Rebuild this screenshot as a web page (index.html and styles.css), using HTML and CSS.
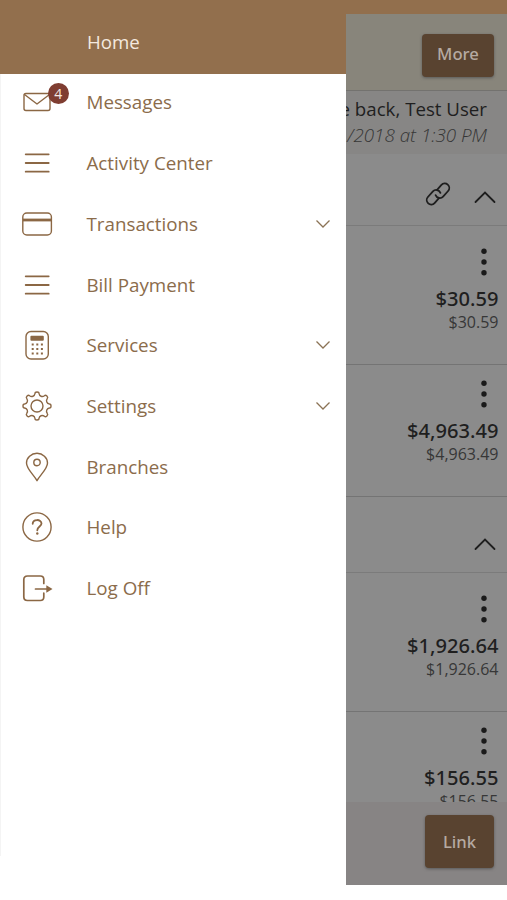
FILE: index.html
```html
<!DOCTYPE html>
<html lang="en">
<head>
<meta charset="utf-8">
<title>Home</title>
<link rel="stylesheet" href="styles.css">
</head>
<body>
<div class="app">
  <nav class="drawer">
    <div class="home">Home</div>
    <ul class="menu">
      <li><span class="icon"><svg viewBox="-18 -18 36 36"><rect x="-13" y="-8.5" width="26" height="17" rx="2"/><path d="M-12.5-7.5L0 2 12.5-7.5"/></svg><b class="badge">4</b></span><span class="label">Messages</span></li>
      <li><span class="icon"><svg viewBox="-18 -18 36 36"><path class="bars" d="M-11.3-8.7h23M-11.3 0h23M-11.3 8.7h23"/></svg></span><span class="label">Activity Center</span></li>
      <li><span class="icon"><svg viewBox="-18 -18 36 36"><rect x="-14.2" y="-11" width="28.6" height="22" rx="4"/><path class="stripe" d="M-14-4h28"/></svg></span><span class="label">Transactions</span><svg class="chevron" viewBox="0 0 16 10"><path d="M1.5 1.5L8 8l6.500-6.500"/></svg></li>
      <li><span class="icon"><svg viewBox="-18 -18 36 36"><path class="bars" d="M-11.3-8.7h23M-11.3 0h23M-11.3 8.7h23"/></svg></span><span class="label">Bill Payment</span></li>
      <li><span class="icon"><svg viewBox="-18 -18 36 36"><rect x="-11" y="-13.500" width="22.300" height="27.500" rx="5"/><rect class="solid" x="-6.600" y="-9.200" width="13.400" height="5" rx="1"/><path class="keys" d="M-5.300-.5h12M-5.300 4h12M-5.300 8.500h12"/></svg></span><span class="label">Services</span><svg class="chevron" viewBox="0 0 16 10"><path d="M1.500 1.500L8 8l6.500-6.500"/></svg></li>
      <li><span class="icon"><svg viewBox="-18 -18 36 36"><circle r="6"/><path d="M-2-12.500Q-2-14 0-14Q2-14 2-12.500C2.400-9.800 5.230-8.630 7.420-10.250Q8.490-11.300 9.900-9.900Q11.300-8.490 10.250-7.420C8.630-5.230 9.800-2.400 12.500-2Q14-2 14 0Q14 2 12.500 2C9.800 2.400 8.630 5.230 10.250 7.420Q11.300 8.490 9.900 9.900Q8.490 11.300 7.420 10.250C5.230 8.630 2.400 9.800 2 12.500Q2 14 0 14Q-2 14-2 12.500C-2.400 9.800-5.230 8.630-7.420 10.250Q-8.490 11.300-9.900 9.900Q-11.300 8.490-10.250 7.420C-8.630 5.230-9.800 2.400-12.500 2Q-14 2-14 0Q-14-2-12.500-2C-9.800-2.400-8.630-5.230-10.250-7.420Q-11.300-8.490-9.900-9.900Q-8.490-11.300-7.420-10.250C-5.230-8.630-2.400-9.800-2-12.500Z"/></svg></span><span class="label">Settings</span><svg class="chevron" viewBox="0 0 16 10"><path d="M1.500 1.500L8 8l6.500-6.500"/></svg></li>
      <li><span class="icon"><svg viewBox="-18 -18 36 36"><path d="M0 13.700C-3 8-10.500 2-10.500-4A10.500 9.700 0 0 1 10.500-4C10.500 2 3 8 0 13.700Z"/><circle cy="-4.500" r="3.200"/></svg></span><span class="label">Branches</span></li>
      <li><span class="icon"><svg viewBox="-18 -18 36 36"><circle r="14.100"/><path class="query" d="M-4.300-3.200C-4.300-8.200 4.500-8.200 4.500-3.400C4.500-.5.300-.3.300 3.300"/><circle class="solid" cx=".3" cy="6.500" r="1.200"/></svg></span><span class="label">Help</span></li>
      <li><span class="icon"><svg viewBox="-18 -18 36 36"><path class="door" d="M6.800-4.500V-8.500Q6.800-12 3.300-12H-9.500Q-13.200-12-13.200-8.300V8.700Q-13.200 12.500-9.500 12.500H3.300Q6.800 12.500 6.800 9V5.200M-1.500 1H11"/><path class="solid" d="M9.300-2.800L15.500 1 9.300 4.800Z"/></svg></span><span class="label">Log Off</span></li>
    </ul>
  </nav>
  <main class="page">
    <header class="toolbar"><button class="btn more">More</button></header>
    <section class="welcome"><p>e back, Test User</p><p class="last">/2018 at 1:30 PM</p></section>
    <div class="accounts">
      <div class="group first"><svg class="chain" viewBox="0 0 28 28"><g transform="rotate(-48 14 14)"><path d="M11.500 17.500H5a4.500 4.500 0 0 1 0-9h7.500a4.500 4.500 0 0 1 4 6.500"/><path d="M16.500 10.500H23a4.500 4.500 0 0 1 0 9h-7.500a4.500 4.500 0 0 1-4-6.500"/></g></svg><svg class="fold" viewBox="0 0 22 14"><path d="M1.500 12L11 2.500 20.500 12"/></svg></div>
      <article class="account a1"><svg class="dots" viewBox="0 0 6 28"><circle cx="3" cy="3.200" r="2.700"/><circle cx="3" cy="14" r="2.700"/><circle cx="3" cy="24.800" r="2.700"/></svg><strong>$30.59</strong><span>$30.59</span></article>
      <article class="account a2"><svg class="dots" viewBox="0 0 6 28"><circle cx="3" cy="3.200" r="2.700"/><circle cx="3" cy="14" r="2.700"/><circle cx="3" cy="24.800" r="2.700"/></svg><strong>$4,963.49</strong><span>$4,963.49</span></article>
      <div class="group second"><svg class="fold" viewBox="0 0 22 14"><path d="M1.500 12L11 2.500 20.500 12"/></svg></div>
      <article class="account a1"><svg class="dots" viewBox="0 0 6 28"><circle cx="3" cy="3.200" r="2.700"/><circle cx="3" cy="14" r="2.700"/><circle cx="3" cy="24.800" r="2.700"/></svg><strong>$1,926.64</strong><span>$1,926.64</span></article>
      <article class="account a2"><svg class="dots" viewBox="0 0 6 28"><circle cx="3" cy="3.200" r="2.700"/><circle cx="3" cy="14" r="2.700"/><circle cx="3" cy="24.800" r="2.700"/></svg><strong>$156.55</strong><span>$156.55</span></article>
    </div>
    <footer class="actions"><button class="btn link">Link</button></footer>
  </main>
</div>
</body>
</html>
```
FILE: styles.css
```css
* { box-sizing: border-box; }
body { margin: 0; background: #fff; font-family: "Open Sans", "Noto Sans", sans-serif; }
p, ul { margin: 0; padding: 0; }
.app { display: flex; height: 900px; overflow: hidden; background: linear-gradient(#926f4d 15px, #fff 15px); }
.drawer { width: 346px; flex: none; color: #8b6c4b; }
.home { height: 74px; padding: 28.5px 0 0 87px; background: #926f4d; color: #f4e9df; font-size: 18.7px; line-height: 26px; }
.menu { height: 782px; list-style: none; border-left: 1.5px solid #f4f4f4; }
.menu li { display: flex; align-items: center; height: 60.67px; padding-right: 15px; }
.menu li:first-child { height: 59px; padding-bottom: 3px; }
.icon { position: relative; width: 36px; height: 36px; margin-left: 18.3px; }
.icon svg { display: block; width: 36px; height: 36px; fill: none; stroke: #8b6744; stroke-width: 1.4; stroke-linecap: round; stroke-linejoin: round; }
.icon .bars { stroke-width: 1.8; }
.icon .stripe { stroke-width: 2.8; stroke-linecap: butt; }
.icon .solid { fill: #8b6744; stroke: none; }
.icon .keys { stroke-width: 2; stroke-dasharray: 2 2.6; stroke-linecap: butt; }
.icon .query { stroke-width: 1.8; }
.icon .door { stroke-width: 1.7; }
.badge { position: absolute; left: 28.500px; top: -1px; width: 21px; height: 21px; border-radius: 50%; background: #7f3d31; color: #f5e9e3; font-size: 14px; font-weight: 400; line-height: 22px; text-align: center; }
.label { flex: 1; margin-left: 31.2px; font-size: 18.8px; line-height: 26px; }
.chevron { width: 16px; height: 10px; fill: none; stroke: #8b7355; stroke-width: 1.3; }
.page { width: 161px; height: 871px; margin-top: 14px; display: flex; flex-direction: column; overflow: hidden; background: #8b8b8b; color: #1f1f1f; }
.toolbar { height: 77px; flex: none; padding: 20px 13px 0 0; text-align: right; background: #88857b; border-bottom: 1px solid #73726f; }
.btn { border: 0; border-radius: 4px; background: #594330; color: #b5aaa2; font: 500 16.7px "Noto Sans", "Open Sans", sans-serif; box-shadow: 0 1px 3px #5a5a5a; }
.more { width: 72px; height: 43px; padding: 0 0 4px; }
.welcome { height: 63px; flex: none; display: flex; flex-direction: column; align-items: flex-end; padding: 4px 20px 0 0; background: #878685; white-space: nowrap; font-size: 18.7px; line-height: 27px; }
.welcome .last { color: #363636; font-size: 18.8px; font-style: italic; font-weight: 300; }
.accounts { flex: 1; min-height: 0; overflow: hidden; }
.group { display: flex; justify-content: flex-end; padding-right: 11px; border-bottom: 1px solid #7b7b7b; }
.first { height: 72px; padding-top: 26px; }
.second { height: 76px; padding-top: 40px; }
.chain { width: 28px; height: 28px; margin-right: 22px; fill: none; stroke: #1e1e1e; stroke-width: 1.8; stroke-linecap: round; overflow: visible; }
.fold { width: 22px; height: 14px; fill: none; stroke: #1e1e1e; stroke-width: 1.8; stroke-linecap: round; }
.first .fold { margin-top: 10px; }
.account { display: flex; flex-direction: column; align-items: flex-end; padding-right: 8.5px; border-bottom: 1px solid #747474; }
.a1 { height: 138.5px; padding-top: 22px; }
.a2 { height: 132.5px; padding-top: 15.5px; }
.dots { width: 6px; height: 28px; margin-right: 11.5px; fill: #1a1a1a; }
.account strong { margin-top: 8.5px; font: 500 20.1px/27px "Noto Sans", "Open Sans", sans-serif; }
.account span { color: #373737; font-size: 16px; line-height: 20px; }
.actions { height: 83px; flex: none; padding: 13px 13px 0 0; text-align: right; background: #878484; }
.link { width: 69px; height: 53px; }
```
